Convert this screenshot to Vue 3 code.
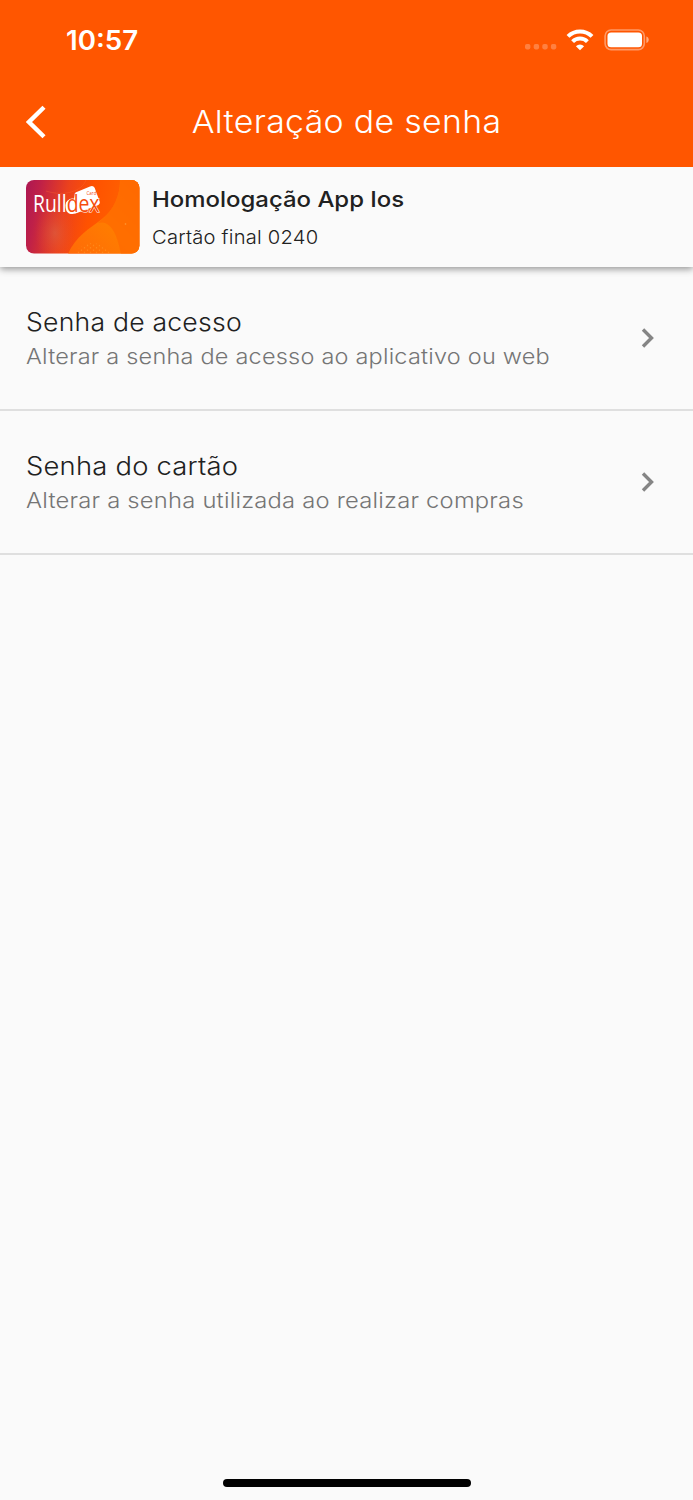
<script setup>
const options = [
  { title: 'Senha de acesso', detail: 'Alterar a senha de acesso ao aplicativo ou web', key: 'access' },
  { title: 'Senha do cartão', detail: 'Alterar a senha utilizada ao realizar compras', key: 'card' },
]
</script>

<template>
  <main class="screen">
    <header class="header">
      <div class="status">
        <span class="time">10:57</span>
        <div class="indicators">
          <svg class="dots" width="34" height="24" viewBox="0 0 34 24">
            <g fill="#fff" fill-opacity=".25">
              <rect x="1" y="15" width="5.4" height="5.4" rx="1.8" />
              <rect x="9.7" y="15" width="5.4" height="5.4" rx="1.8" />
              <rect x="18.3" y="15" width="5.4" height="5.4" rx="1.8" />
              <rect x="26.9" y="15" width="5.4" height="5.4" rx="1.8" />
            </g>
          </svg>
          <svg class="wifi" width="28" height="22" viewBox="0 0 28 22">
            <g fill="none" stroke="#fff" stroke-width="4">
              <path d="M2 7.4a17 17 0 0 1 24 0" />
              <path d="M6.6 12.6a10.5 10.5 0 0 1 14.8 0" />
            </g>
            <path d="M14 21.2 9.9 17.2a5.9 5.9 0 0 1 8.2 0Z" fill="#fff" />
          </svg>
          <svg class="battery" width="46" height="22" viewBox="0 0 46 22">
            <rect x="1.1" y="1" width="39.2" height="19.6" rx="6" fill="none" stroke="#fff" stroke-opacity=".4" stroke-width="1.6" />
            <rect x="3.5" y="3.4" width="34.5" height="14.9" rx="3.6" fill="#fff" />
            <path d="M42.4 7.4c3.1 1.2 3.1 5.4 0 6.6Z" fill="#fff" fill-opacity=".5" />
          </svg>
        </div>
      </div>
      <div class="toolbar">
        <svg class="back" width="20" height="34" viewBox="0 0 20 34">
          <path d="M18 2.2 3 17 18 31.8" fill="none" stroke="#fff" stroke-width="4.4" />
        </svg>
        <h1 class="title">Alteração de senha</h1>
      </div>
    </header>

    <section class="account">
      <svg class="card" width="114" height="74" viewBox="0 0 114 74">
        <defs>
          <linearGradient id="base" x1="0" y1="0" x2="1" y2="0.12">
            <stop offset="0" stop-color="#ac1753" />
            <stop offset=".13" stop-color="#bf2048" />
            <stop offset=".38" stop-color="#ec421c" />
            <stop offset=".6" stop-color="#ff5200" />
            <stop offset="1" stop-color="#ff6600" />
          </linearGradient>
          <linearGradient id="wave" x1="0" y1="1" x2="1" y2="0">
            <stop offset="0" stop-color="#ff6a08" />
            <stop offset=".5" stop-color="#ff7d00" />
            <stop offset="1" stop-color="#ff6900" />
          </linearGradient>
          <radialGradient id="glow">
            <stop offset="0" stop-color="#d96a4a" stop-opacity=".5" />
            <stop offset="1" stop-color="#e8502a" stop-opacity="0" />
          </radialGradient>
          <pattern id="grain" width="6" height="4.6" patternUnits="userSpaceOnUse">
            <circle cx="1.5" cy="1.2" r=".7" fill="#ffa12e" />
            <circle cx="4.5" cy="3.5" r=".7" fill="#ffa12e" />
          </pattern>
          <clipPath id="outline"><rect width="113.4" height="73.6" rx="8" /></clipPath>
        </defs>
        <g clip-path="url(#outline)">
          <rect width="114" height="74" fill="url(#base)" />
          <ellipse cx="29" cy="53" rx="20" ry="30" fill="url(#glow)" />
          <path d="M60 0C56 11 39 17 20 11" fill="none" stroke="#ff6633" stroke-opacity=".35" />
          <path d="M42 74C49 57 64 48 76 39S94 15 94 0h20v74Z" fill="url(#wave)" />
          <path d="M72 43c14-4 20 15 23 31h19V0H94c0 21-10 33-22 43Z" fill="#ff6a00" fill-opacity=".75" />
          <path d="M47 74q17-18 29-7l12 7Z" fill="url(#grain)" fill-opacity=".6" />
          <circle cx="99.5" cy="44" r=".8" fill="#ff9c38" />
        </g>
        <path d="M49.5 12.5 64 6.4q3.2-1.400 4.6 1.400l5 13.400q.8 2.600-1.800 4L49.500 33.600q-3.600 1-6.500-.2-3.500-1.500-3.500-8.200 0-6.200 8.500-6.400Z" fill="#fff" />
        <text class="brand" x="7" y="31.5" textLength="66.500" lengthAdjust="spacingAndGlyphs" fill="#fff">Rull<tspan class="brand-end">dex</tspan></text>
        <text class="brand-small" x="60.500" y="14.500" fill="#f54c0b">Card</text>
      </svg>
      <div class="identity">
        <strong class="name">Homologação App Ios</strong>
        <span class="number">Cartão final 0240</span>
      </div>
    </section>

    <nav class="options">
      <a v-for="option in options" :key="option.key" class="option">
        <span class="copy">
          <span class="option-title" :class="option.key">{{ option.title }}</span>
          <span class="option-detail" :class="option.key">{{ option.detail }}</span>
        </span>
        <svg class="chevron" width="14" height="20" viewBox="0 0 14 20">
          <path d="M2 1.5 10.5 10 2 18.5" fill="none" stroke="#858585" stroke-width="3.4" />
        </svg>
      </a>
    </nav>

    <div class="home-indicator"></div>
  </main>
</template>

<style>
body {
  margin: 0;
  background: #fafafa;
}
</style>

<style scoped>
.screen {
  display: flex;
  flex-direction: column;
  box-sizing: border-box;
  width: 693px;
  height: 1500px;
  overflow: hidden;
  background: #fafafa;
  color: #212121;
  font-family: Inter, "Liberation Sans", sans-serif;
  font-weight: 300;
}
.header {
  position: relative;
  z-index: 1;
  height: 166.7px;
  flex: none;
  background: #ff5600;
  color: #fff;
}
.status {
  display: flex;
  justify-content: space-between;
  align-items: center;
  height: 79px;
  padding: 0 43px 0 66px;
}
.time {
  font-size: 26.5px;
  font-weight: 570;
  transform: scaleX(1.045);
  transform-origin: left;
}
.indicators {
  display: flex;
  align-items: center;
}
.dots {
  margin-top: 2px;
  margin-right: 8px;
}
.wifi {
  margin-right: 10px;
}
.toolbar {
  display: grid;
  grid-template-columns: 20px 1fr 20px;
  align-items: center;
  height: 85px;
  padding: 0 26px;
}
.title {
  margin: 0;
  text-align: center;
  font-size: 31.5px;
  font-weight: 300;
  line-height: 40px;
  letter-spacing: .3px;
  white-space: nowrap;
  transform: scaleX(1.074);
}
.account {
  display: flex;
  gap: 13px;
  flex: none;
  box-sizing: border-box;
  height: 100px;
  padding: 13px 26px;
  background: #fafafa;
  box-shadow: 0 2px 7px rgba(0, 0, 0, .42);
}
.brand {
  font: 500 24.5px "Open Sans", sans-serif;
}
.brand-end {
  fill: #f54c0b;
  paint-order: stroke;
  stroke: #fff;
  stroke-width: 1.2px;
}
.brand-small {
  font: 400 4.5px "Open Sans", sans-serif;
}
.identity {
  display: flex;
  flex-direction: column;
  align-items: flex-start;
  gap: 11px;
  padding-top: 4px;
  margin-left: -1px;
}
.name,
.number,
.option-title,
.option-detail {
  transform-origin: left;
  white-space: nowrap;
}
.name {
  font-size: 22px;
  font-weight: 500;
  line-height: 30px;
  transform: scaleX(1.088);
}
.number {
  font-size: 18.8px;
  line-height: 26px;
  letter-spacing: .2px;
  transform: scaleX(1.073);
}
.options {
  padding-top: .3px;
}
.option {
  display: flex;
  justify-content: space-between;
  align-items: center;
  box-sizing: border-box;
  height: 144px;
  padding: 1px 38px 0 26px;
  border-bottom: 2px solid #dfdfdf;
}
.copy {
  display: flex;
  flex-direction: column;
  align-items: flex-start;
  gap: 2px;
  padding-top: 1px;
}
.option-title {
  font-size: 25px;
  line-height: 32px;
  letter-spacing: .2px;
}
.option-title.access {
  transform: scaleX(1.064);
}
.option-title.card {
  transform: scaleX(1.095);
}
.option-detail {
  font-size: 22px;
  line-height: 32px;
  letter-spacing: .2px;
  color: #757575;
}
.option-detail.access {
  transform: scaleX(1.068);
}
.option-detail.card {
  transform: scaleX(1.08);
}
.home-indicator {
  width: 248px;
  height: 8px;
  margin: auto auto 13px;
  border-radius: 4px;
  background: #000;
}
</style>
